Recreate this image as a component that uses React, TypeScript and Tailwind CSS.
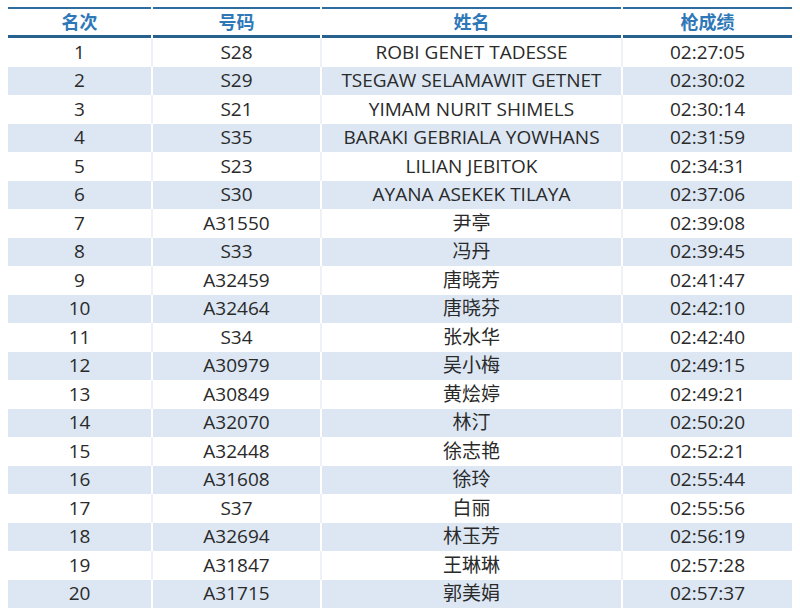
import React from "react";

const rows: [string, string, string, string][] = [
  ["1", "S28", "ROBI GENET TADESSE", "02:27:05"],
  ["2", "S29", "TSEGAW SELAMAWIT GETNET", "02:30:02"],
  ["3", "S21", "YIMAM NURIT SHIMELS", "02:30:14"],
  ["4", "S35", "BARAKI GEBRIALA YOWHANS", "02:31:59"],
  ["5", "S23", "LILIAN JEBITOK", "02:34:31"],
  ["6", "S30", "AYANA ASEKEK TILAYA", "02:37:06"],
  ["7", "A31550", "尹亭", "02:39:08"],
  ["8", "S33", "冯丹", "02:39:45"],
  ["9", "A32459", "唐晓芳", "02:41:47"],
  ["10", "A32464", "唐晓芬", "02:42:10"],
  ["11", "S34", "张水华", "02:42:40"],
  ["12", "A30979", "吴小梅", "02:49:15"],
  ["13", "A30849", "黄烩婷", "02:49:21"],
  ["14", "A32070", "林汀", "02:50:20"],
  ["15", "A32448", "徐志艳", "02:52:21"],
  ["16", "A31608", "徐玲", "02:55:44"],
  ["17", "S37", "白丽", "02:55:56"],
  ["18", "A32694", "林玉芳", "02:56:19"],
  ["19", "A31847", "王琳琳", "02:57:28"],
  ["20", "A31715", "郭美娟", "02:57:37"],
];

const headers = ["名次", "号码", "姓名", "枪成绩"];

export default function App() {
  return (
    <div
      className="w-[800px] h-[616px] bg-white pt-[7px] pl-[8px]"
      style={{ fontFamily: "'Open Sans', 'Noto Sans CJK SC', sans-serif" }}
    >
      <div className="w-[784px]">
        <div className="grid grid-cols-[143px_167px_299px_169px] gap-x-[2px]">
          {headers.map((h) => (
            <div
              key={h}
              className="h-[31px] flex items-center justify-center border-t-2 border-b-[3px] border-t-[#2f6d9f] border-b-[#26628d] text-[18px] font-bold text-[#2f78b8] leading-none"
            >
              {h}
            </div>
          ))}
        </div>
        {rows.map((r, i) => {
          const blue = i % 2 === 1;
          return (
            <div
              key={r[0]}
              className={
                "grid grid-cols-[143px_167px_299px_169px] gap-x-[2px] h-[28.5px] " +
                (blue ? "bg-white" : "bg-[#eef1f5]")
              }
            >
              {r.map((c, j) => (
                <div
                  key={j}
                  className={
                    "flex items-center justify-center text-[19px] text-[#2a2a2a] leading-none " +
                    (blue ? "bg-[#dce7f3]" : "bg-white")
                  }
                >
                  {c}
                </div>
              ))}
            </div>
          );
        })}
      </div>
    </div>
  );
}
